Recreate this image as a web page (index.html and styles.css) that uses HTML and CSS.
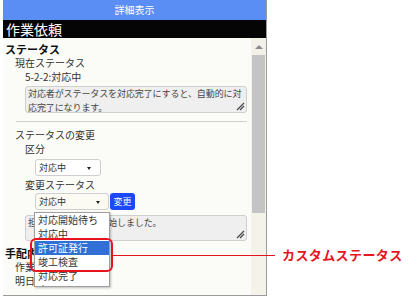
FILE: index.html
```html
<!DOCTYPE html>
<html lang="ja">
<head>
<meta charset="utf-8">
<link rel="stylesheet" href="styles.css">
</head>
<body>
<div class="frame">
  <div class="titlebar">詳細表示</div>
  <div class="sectionbar">作業依頼</div>
  <div class="main">
    <div class="content">
      <div class="h">ステータス</div>
      <div class="l1">現在ステータス</div>
      <div class="l2">5-2-2:対応中</div>
      <div class="ta">対応者がステータスを対応完了にすると、自動的に対応完了になります。<svg class="grip" width="9" height="9" viewBox="0 0 9 9"><path d="M8 1L1 8M8 4L4 8" stroke="#444" stroke-width="1.2"/></svg></div>
      <div class="sep"></div>
      <div class="l1 mt">ステータスの変更</div>
      <div class="l2">区分</div>
      <div class="sel sel1">対応中<span class="caret"></span></div>
      <div class="l2 mt2">変更ステータス</div>
      <div class="selrow">
        <div class="sel sel2">対応中<span class="caret"></span></div>
        <div class="btn">変更</div>
      </div>
      <div class="ta ta2">担当業者が作業を開始しました。<svg class="grip" width="9" height="9" viewBox="0 0 9 9"><path d="M8 1L1 8M8 4L4 8" stroke="#444" stroke-width="1.2"/></svg></div>
      <div class="h h2">手配内容</div>
      <div class="l1">作業者</div>
      <div class="l1">明日中</div>
    </div>
    <div class="scrollbar">
      <div class="arrow"><span class="tri"></span></div>
      <div class="thumb"></div>
    </div>
  </div>
</div>

<div class="dropdown">
  <div class="opt">対応開始待ち</div>
  <div class="opt">対応中</div>
  <div class="opt on">許可証発行</div>
  <div class="opt">竣工検査</div>
  <div class="opt">対応完了</div>
  <div class="opt">完了</div>
</div>
<div class="mark"></div>
<div class="leader"></div>
<div class="callout">カスタムステータス</div>
</body>
</html>
```
FILE: styles.css
```css
html, body {
  margin: 0;
  padding: 0;
  background: #ffffff;
}
body {
  position: relative;
  width: 410px;
  height: 299px;
  overflow: hidden;
  font-family: "Noto Sans CJK JP", "Noto Sans", sans-serif;
  color: #333;
}
.frame {
  margin-left: 3px;
  width: 264px;
  height: 296px;
  box-sizing: border-box;
  border-right: 1px solid #9a9a9a;
  border-bottom: 1px solid #9a9a9a;
  display: flex;
  flex-direction: column;
  background: #fbfbf7;
}
.titlebar {
  height: 20px;
  background: #5a8ef5;
  color: #fff;
  font-size: 10px;
  line-height: 20px;
  text-align: center;
}
.sectionbar {
  height: 18px;
  background: #050505;
  color: #fff;
  font-size: 14px;
  line-height: 18px;
  padding-left: 3px;
}
.main {
  flex: 1;
  display: flex;
  min-height: 0;
}
.content {
  flex: 1;
  overflow: hidden;
  padding: 4px 0 0 2px;
  font-size: 10px;
  line-height: 14px;
}
.h {
  font-weight: bold;
  color: #111;
  font-size: 11px;
}
.h2 { margin-top: 5px; }
.l1 { margin-left: 10px; }
.l2 { margin-left: 20px; }
.mt { margin-top: 6px; }
.mt2 { margin-top: 2px; }
.ta {
  position: relative;
  margin: 2px 0 0 20px;
  width: 222px;
  height: 27px;
  box-sizing: border-box;
  border: 1px solid #cfcfcf;
  border-radius: 3px;
  background: #efefef;
  padding: 0 1px 0 2px;
  font-size: 9px;
  line-height: 14px;
  letter-spacing: -0.1px;
  color: #444;
  overflow: hidden;
}
.ta2 {
  margin-top: 5px;
  height: 26px;
}
.grip {
  position: absolute;
  right: 1px;
  bottom: 1px;
}
.sep {
  margin: 8px 0 0 11px;
  width: 231px;
  height: 1px;
  background: #cfcfcf;
}
.sel {
  position: relative;
  box-sizing: border-box;
  height: 17px;
  border: 1px solid #cfcfcf;
  border-radius: 3px;
  background: #fff;
  font-size: 9px;
  line-height: 15px;
  padding-left: 3px;
  color: #333;
}
.sel1 {
  margin: 3px 0 0 30px;
  width: 66px;
}
.selrow {
  display: flex;
  gap: 1px;
  margin: 1px 0 0 30px;
}
.sel2 {
  width: 74px;
  background: #fbfbf4;
}
.caret {
  position: absolute;
  right: 9px;
  top: 7px;
  width: 0;
  height: 0;
  border-left: 2px solid transparent;
  border-right: 2px solid transparent;
  border-top: 3px solid #222;
}
.sel2 .caret { right: 8px; }
.btn {
  width: 25px;
  height: 17px;
  border-radius: 3px;
  background: #1d48f7;
  color: #fff;
  font-size: 9px;
  line-height: 17px;
  text-align: center;
}
.scrollbar {
  width: 15px;
  background: #f3f3ea;
  display: flex;
  flex-direction: column;
}
.arrow {
  height: 17px;
  display: flex;
  align-items: center;
  justify-content: center;
  background: #f1f1ea;
}
.tri {
  width: 0;
  height: 0;
  border-left: 4px solid transparent;
  border-right: 4px solid transparent;
  border-bottom: 4px solid #8a8a8a;
}
.thumb {
  margin: 0 1px 0 1px;
  height: 158px;
  background: #c4c4c4;
}
.dropdown {
  position: absolute;
  left: 34px;
  top: 212px;
  width: 76px;
  height: 75px;
  box-sizing: border-box;
  border: 1px solid #9f9f9f;
  background: #fff;
  overflow: hidden;
  box-shadow: 1px 1px 2px rgba(0,0,0,0.25);
  font-size: 10px;
  line-height: 14px;
  color: #333;
}
.opt {
  height: 14px;
  padding-left: 3px;
  white-space: nowrap;
}
.opt.on {
  background: #2f6fd6;
  color: #fff;
}
.mark {
  position: absolute;
  left: 30px;
  top: 238px;
  width: 83px;
  height: 34px;
  box-sizing: border-box;
  border: 2px solid #e8141b;
  border-radius: 6px;
}
.leader {
  position: absolute;
  left: 113px;
  top: 255px;
  width: 162px;
  height: 1px;
  background: #e8141b;
}
.callout {
  position: absolute;
  left: 282px;
  top: 246px;
  font-size: 13px;
  line-height: 18px;
  font-weight: bold;
  letter-spacing: 0.4px;
  color: #e8141b;
}
```
